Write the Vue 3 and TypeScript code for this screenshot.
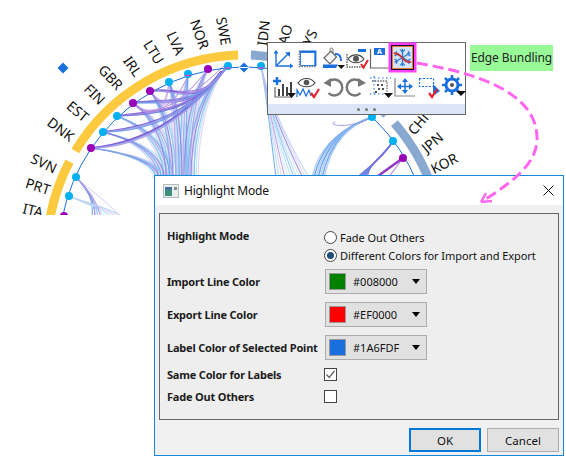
<script setup lang="ts">
const CX = 245
const CY = 253
const rad = (d: number) => (d * Math.PI) / 180
const pt = (r: number, a: number) => `${(CX + r * Math.sin(rad(a))).toFixed(1)} ${(CY - r * Math.cos(rad(a))).toFixed(1)}`
const arc = (r: number, a: number, b: number) => `M${pt(r, a)}A${r} ${r} 0 0 1 ${pt(r, b)}`

const arcs = [
  { d: arc(198, -59, -2), c: '#fdc93f' },
  { d: `M${pt(198, -88)}A198 198 0 0 1 ${pt(198, -62.5)}`, c: '#fdc93f' },
  { d: arc(198, 1.7, 45.6), c: '#8aa9d0' },
  { d: arc(198, 49, 72), c: '#8aa9d0' },
]

interface Lab { t: string; x: number; y: number; r: number }
const labels: Lab[] = [
  { t: 'SWE', x: 224, y: 31, r: 80 },
  { t: 'NOR', x: 200, y: 34, r: 70 },
  { t: 'LVA', x: 176, y: 43, r: 66 },
  { t: 'LTU', x: 154, y: 52, r: 58 },
  { t: 'IRL', x: 133, y: 66, r: 55 },
  { t: 'GBR', x: 111, y: 77, r: 47 },
  { t: 'FIN', x: 95, y: 94, r: 45 },
  { t: 'EST', x: 78, y: 111, r: 40 },
  { t: 'DNK', x: 61, y: 129, r: 37 },
  { t: 'SVN', x: 44, y: 163, r: 25 },
  { t: 'PRT', x: 38, y: 186, r: 17 },
  { t: 'ITA', x: 33, y: 210, r: 13 },
  { t: 'IDN', x: 263, y: 33, r: -84 },
  { t: 'LAO', x: 284, y: 38, r: -76 },
  { t: 'MYS', x: 307, y: 43, r: -65 },
  { t: 'CHN', x: 420, y: 121, r: -50 },
  { t: 'JPN', x: 432, y: 142, r: -40 },
  { t: 'KOR', x: 444, y: 163, r: -27 },
]

const BLUE = '#00b0f0'
const PUR = '#9a00b8'
const points = [
  [228, 66, BLUE], [208, 69, PUR], [188, 74, BLUE], [169, 82, BLUE], [150, 91, PUR], [133, 103, PUR],
  [117, 116, BLUE], [103, 132, BLUE], [91, 148, PUR], [76, 177, BLUE], [69, 196, BLUE], [64, 216, PUR],
  [261, 66, BLUE], [372, 117, BLUE], [393, 141, BLUE], [403, 158, PUR],
].map(([x, y, c]) => ({ x: x as number, y: y as number, c: c as string }))
const marks = [[228, 68], [188, 75.500], [261, 68]]

const light = ['#c6e9fb', '#a6daf7', '#ddcbf1', '#b4d0f6']
const mid = ['#5b9cec', '#7f6fdc', '#7ab8f0', '#b48ee2']

const chords: { d: string; c: string; w: number; o: number }[] = []
function down(x1: number, y1: number, tx: number, ty: number, c: string, w: number, o: number) {
  const h = ty - y1
  const dx = tx - x1
  chords.push({ d: `M${x1} ${y1}C${x1 + dx * 0.7} ${y1 + h * 0.22} ${tx} ${y1 + h * 0.6} ${tx} ${ty}`, c, w, o })
}
function archTo(x1: number, y1: number, x2: number, y2: number, sag: number, c: string, w: number, o: number) {
  chords.push({ d: `M${x1} ${y1}C${x1 + (x2 - x1) * 0.45} ${y1 - sag} ${x2 - 28} ${y2 + 38} ${x2} ${y2}`, c, w, o })
}
const sources: [number, number, number][] = [
  [228, 66, 190], [208, 69, 186], [188, 74, 182], [169, 82, 178], [150, 91, 172],
  [133, 103, 168], [117, 116, 166], [103, 132, 160], [91, 148, 158],
]
sources.forEach(([x, y, t], i) => {
  for (let k = 0; k < 7; k++) {
    down(x, y, t + k * 2.2 - 5, 178, light[(i + k) % 4], 1.1, 0.8)
  }
})
sources.forEach(([x, y, t], i) => {
  for (let k = 0; k < 3; k++) {
    down(x, y, t + k * 3 - 2, 178, mid[(i + k) % 4], 1.2, 0.7)
  }
})
;[[91, 148], [103, 132], [117, 116], [133, 103], [150, 91]].forEach(([x, y], i) => {
  for (let k = 0; k < 4; k++) {
    archTo(x, y, k % 2 ? 228 : 221, k % 2 ? 66 : 72, 6 - k * 2, k === 0 ? '#7a3fd0' : mid[(i + k) % 4], k === 0 ? 1.8 : 1.1, 0.85)
  }
})
;[[150, 91], [133, 103]].forEach(([x, y]) => {
  for (let k = 0; k < 4; k++) {
    chords.push({ d: `M${x} ${y}C${x + 12} ${y + 16} ${165 + k * 5} ${118 - k * 3} ${169 + k * 19} ${82 - k * 6}`, c: '#b48ee2', w: 1, o: 0.7 })
  }
})
for (let k = 0; k < 12; k++) {
  chords.push({ d: `M261 66C266 90 ${270 + k} 130 ${276 + k * 3} 178`, c: k % 3 === 0 ? mid[k % 4] : light[k % 4], w: 1.1, o: 0.8 })
}
for (let k = 0; k < 7; k++) {
  chords.push({ d: `M372 117C350 125 ${320 + k * 2} 140 ${312 + k * 2} 178`, c: k % 2 ? '#5b9cec' : '#a9c8f5', w: 1.4, o: 0.9 })
  chords.push({ d: `M393 141C385 155 ${372 - k} 165 ${356 + k * 2} 178`, c: k % 2 ? '#5b8fe8' : '#7f6fdc', w: 1.4, o: 0.9 })
}
chords.push({ d: 'M372 117C350 130 325 125 335 122', c: '#8a6fdc', w: 1, o: 0.7 })
chords.push({ d: 'M403 158L378 176', c: '#8a1fc0', w: 2.5, o: 0.9 })
chords.push({ d: 'M403 158L388 178', c: '#b07ad8', w: 1.2, o: 0.9 })
for (let k = 0; k < 4; k++) {
  chords.push({ d: `M76 177C88 190 ${94 + k} 200 ${92 + k * 3} 218`, c: mid[k % 4], w: 1.2, o: 0.8 })
  chords.push({ d: `M69 196C82 202 ${100 + k * 4} 208 ${106 + k * 6} 218`, c: light[k % 4], w: 1.2, o: 0.9 })
}
chords.push({ d: 'M76 177C90 190 105 200 122 218', c: '#d9c4ef', w: 1, o: 0.9 })

const rows = [
  { label: 'Import Line Color', color: '#008000', text: '#008000' },
  { label: 'Export Line Color', color: '#ff0000', text: '#EF0000' },
  { label: 'Label Color of Selected Point', color: '#1a6fdf', text: '#1A6FDF' },
]
</script>

<template>
  <div class="page">
    <svg class="canvas" width="566" height="457" viewBox="0 0 566 457">
      <defs>
        <clipPath id="cut"><rect x="0" y="0" width="566" height="215" /></clipPath>
      </defs>
      <g clip-path="url(#cut)">
        <path v-for="(a, i) in arcs" :key="i" :d="a.d" :stroke="a.c" stroke-width="9" fill="none" />
        <g fill="none" stroke-linecap="round">
          <path v-for="(c, i) in chords" :key="i" :d="c.d" :stroke="c.c" :stroke-width="c.w" :opacity="c.o" />
        </g>
        <circle cx="245" cy="253" r="186" fill="none" stroke="#1a6fdf" stroke-width="1" />
        <circle v-for="(p, i) in points" :key="i" :cx="p.x" :cy="p.y" r="4" :fill="p.c" />
        <path v-for="(m, i) in marks" :key="'m' + i" :d="`M${m[0] - 3} ${m[1]}h6`" stroke="#ff2fc0" stroke-width="1.200" />
        <text
          v-for="l in labels"
          :key="l.t"
          class="lab"
          text-anchor="middle"
          dominant-baseline="central"
          :transform="`translate(${l.x} ${l.y}) rotate(${l.r})`"
        >{{ l.t }}</text>
      </g>
      <path d="M63 62.500l5.500 5.500l-5.500 5.500l-5.500-5.500z" fill="#1a6fdf" />
      <path d="M244 62.500l5 5l-5 5l-5-5z" fill="#1a6fdf" />
      <path d="M239 67.500h10" stroke="#fff" stroke-width="1" />
    </svg>

    <section class="toolbar">
      <div class="tools">
        <svg class="ic" viewBox="0 0 24 24" fill="none" stroke="#1a6fdf" stroke-width="1.400">
          <path d="M4 5V20H20" /><path d="M4.500 19.500L17 7" />
          <path d="M1.500 7.500L4 4L6.500 7.500ZM18 17.500L21.500 20L18 22.500ZM13 6.500L18 6V11Z" fill="#1a6fdf" stroke="none" />
        </svg>
        <svg class="ic" viewBox="0 0 24 24" fill="none">
          <path d="M3 5.500H19.500V20" stroke="#1a6fdf" stroke-width="1.800" />
          <path d="M3.500 5V20.500H20" stroke="#777" stroke-width="1.600" stroke-dasharray="1.500 1" />
          <path d="M4.500 6.500H19V19.500H4.500Z" stroke="#1a6fdf" stroke-width="1" opacity=".9" />
        </svg>
        <svg class="ic" viewBox="0 0 24 24" fill="none">
          <path d="M3 12L10 5L15.500 11L9 18Z" fill="#f4f4f4" stroke="#666" stroke-width="1.200" />
          <path d="M9 7V3.500A1.500 1.500 0 0 1 12 3.500V8" stroke="#777" stroke-width="1" />
          <path d="M14 8C18 7.500 20 10 20 15" stroke="#1a6fdf" stroke-width="2" />
          <path d="M2 18.500H17L15 22H2Z" fill="#1a6fdf" />
          <path d="M16.500 19H24L20.200 23Z" fill="#111" />
        </svg>
        <svg class="ic" viewBox="0 0 24 24" fill="none">
          <path d="M2 8V21H20" stroke="#666" stroke-width="1.500" stroke-dasharray="1.500 1" />
          <rect x="13" y="3" width="8" height="3" fill="#1a6fdf" />
          <path d="M3 13C7 7.500 15 7.500 19 13C15 18 7 18 3 13Z" fill="#fff" stroke="#444" stroke-width="1.200" />
          <circle cx="11" cy="12.800" r="3" fill="#555" />
          <path d="M16 18L18.500 21.500L23 14" stroke="#e8232a" stroke-width="2" />
        </svg>
        <svg class="ic" viewBox="0 0 24 24" fill="none">
          <path d="M1.500 3V22H20" stroke="#666" stroke-width="1.200" />
          <rect x="5" y="2" width="11" height="7" fill="#1a6fdf" />
          <text x="10.500" y="8.200" class="mini" text-anchor="middle">A</text>
        </svg>
        <div class="active">
          <svg width="19" height="21" viewBox="0 0 24 24" fill="none">
            <g stroke="#2c78d8" stroke-width="1.600">
              <path d="M12 1V23M2 6L22 18M2 18L22 6" />
              <path d="M9 2L12 5L15 2M2 10L5.500 8L4 4M20 4L18.500 8L22 10M2 14L5.500 16L4 20M20 20L18.500 16L22 14M9 22L12 19L15 22" />
            </g>
            <path d="M1 7C8 6 10 11 13 14C15 17 19 18 23 18" stroke="#d92b2b" stroke-width="2.200" />
          </svg>
        </div>
      </div>
      <div class="tools second">
        <svg class="ic" viewBox="0 0 24 24" fill="none">
          <path d="M1 6H9M5 2V10" stroke="#1a6fdf" stroke-width="2.400" />
          <path d="M3 12V22H20" stroke="#666" stroke-width="1.200" />
          <path d="M7 21V14M11 21V9M15 21V12M19 21V7" stroke="#444" stroke-width="2" />
          <path d="M15 18H24L19.500 23Z" fill="#111" />
        </svg>
        <svg class="ic" viewBox="0 0 24 24" fill="none">
          <path d="M2 8C6 2 15 2 19 8C15 13 6 13 2 8Z" fill="#fff" stroke="#444" stroke-width="1.200" />
          <circle cx="10.500" cy="7.500" r="2.800" fill="#555" />
          <path d="M1 22V15L4 20L7 14L10 21L13 15L15 21" stroke="#1a6fdf" stroke-width="1.200" />
          <path d="M15 18L18 22L23 14" stroke="#e8232a" stroke-width="2.200" />
        </svg>
        <svg class="ic" viewBox="0 0 24 24" fill="none">
          <path d="M8 6.500A8 8 0 1 1 7.500 18" stroke="#777" stroke-width="2.400" />
          <path d="M2.500 8L10 3V12Z" fill="#777" />
        </svg>
        <svg class="ic" viewBox="0 0 24 24" fill="none">
          <path d="M15 6.500A8 8 0 1 0 15.500 18" stroke="#777" stroke-width="2.400" />
          <path d="M21 8L13 3V12Z" fill="#777" />
        </svg>
        <svg class="ic" viewBox="0 0 24 24" fill="none">
          <path d="M3 6H18V18" stroke="#666" stroke-width="1.300" stroke-dasharray="1.500 1.200" />
          <path d="M1 3H22M5 1V19M1 19H16" stroke="#1a6fdf" stroke-width="1" stroke-dasharray="1.500 2.500" />
          <path d="M8 9h2v2H8zM12 9h2v2h-2zM9 13h2v2H9zM13 13h2v2h-2zM6 16h2v2H6z" fill="#555" />
          <path d="M15 18H24L19.500 23Z" fill="#111" />
        </svg>
        <svg class="ic" viewBox="0 0 24 24" fill="none">
          <path d="M2 3V21H22" stroke="#888" stroke-width="1.200" />
          <path d="M5 11.500H19M12 4V18" stroke="#1a6fdf" stroke-width="1.500" />
          <path d="M4 11.500L8 8.500V14.500ZM20 11.500L16 8.500V14.500ZM12 3L9 7H15ZM12 19L9 15H15Z" fill="#1a6fdf" />
        </svg>
        <svg class="ic" viewBox="0 0 24 24" fill="none">
          <rect x="1.500" y="3.500" width="14" height="8" stroke="#1a6fdf" stroke-width="1.200" stroke-dasharray="2 1.500" />
          <path d="M15 9L15 21L22 16Z" fill="#1a6fdf" />
          <path d="M11 18L14 22L19 14" stroke="#e8232a" stroke-width="2.200" />
        </svg>
        <svg class="ic" viewBox="0 0 24 24" fill="none">
          <circle cx="10" cy="10" r="6" stroke="#1a6fdf" stroke-width="3" />
          <circle cx="10" cy="10" r="2" fill="#555" />
          <path d="M10 0V4M10 16V20M0 10H4M16 10H20M3 3L6 6M14 14L17 17M17 3L14 6M3 17L6 14" stroke="#1a6fdf" stroke-width="2.600" />
          <path d="M14 16H24L19 21Z" fill="#111" />
        </svg>
      </div>
      <div class="grip"><i></i><i></i><i></i></div>
    </section>

    <div class="tip">Edge Bundling</div>

    <section class="dialog">
      <header class="title">
        <svg class="appicon" width="16" height="14" viewBox="0 0 16 14">
          <rect x=".5" y=".5" width="15" height="13" fill="#e8eeee" stroke="#b5bcbc" />
          <rect x="2" y="3" width="7" height="9" fill="#3f8f7a" />
          <rect x="2" y="3" width="7" height="3" fill="#4a6fa0" />
          <rect x="11" y="3" width="3" height="3" fill="#888" />
        </svg>
        <span>Highlight Mode</span>
        <svg class="close" width="11" height="11" viewBox="0 0 11 11"><path d="M.5 .5L10.500 10.500M10.500 .5L.5 10.500" stroke="#111" stroke-width="1" /></svg>
      </header>
      <div class="body">
        <div class="group">
          <div class="row top">
            <div class="lbl up">Highlight Mode</div>
            <div class="radios">
              <label class="radio"><i class="dot"></i>Fade Out Others</label>
              <label class="radio"><i class="dot on"></i>Different Colors for Import and Export</label>
            </div>
          </div>
          <div v-for="r in rows" :key="r.label" class="row combo-row">
            <div class="lbl">{{ r.label }}</div>
            <div class="combo">
              <i class="swatch" :style="{ background: r.color }"></i>
              <span>{{ r.text }}</span>
              <b class="caret"></b>
            </div>
          </div>
          <div class="row check-row first">
            <div class="lbl">Same Color for Labels</div>
            <i class="check">
              <svg width="13" height="13" viewBox="0 0 13 13"><path d="M2.500 6.500L5.200 9.500L10.500 3" fill="none" stroke="#666" stroke-width="1.300" /></svg>
            </i>
          </div>
          <div class="row check-row">
            <div class="lbl">Fade Out Others</div>
            <i class="check"></i>
          </div>
        </div>
        <footer class="actions">
          <button class="btn primary">OK</button>
          <button class="btn">Cancel</button>
        </footer>
      </div>
    </section>

    <svg class="overlay" width="566" height="457" viewBox="0 0 566 457" fill="none">
      <path d="M417 63C470 72 536 90 537 137C538 165 510 183 483 201" stroke="#ff66f0" stroke-width="3" stroke-dasharray="11 5" />
      <path d="M481 202L492 201M481 202L486 193" stroke="#ff66f0" stroke-width="2.500" />
    </svg>
  </div>
</template>

<style scoped>
.page {
  position: relative;
  width: 566px;
  height: 457px;
  overflow: hidden;
  background: #fff;
  font-family: "Noto Sans", "Open Sans", sans-serif;
  color: #111;
}
.canvas,
.overlay {
  position: absolute;
  left: 0;
  top: 0;
}
.overlay {
  pointer-events: none;
}
.lab {
  font-family: "Noto Sans", sans-serif;
  font-size: 14px;
  fill: #111;
}
.toolbar {
  position: absolute;
  left: 267px;
  top: 42px;
  width: 199px;
  height: 73px;
  box-sizing: border-box;
  border: 1px solid #666;
  background: #fff;
  display: flex;
  flex-direction: column;
}
.tools {
  display: flex;
  height: 30px;
  padding-left: 4px;
  padding-top: 3px;
  gap: .3px;
  box-sizing: border-box;
}
.second {
  height: 31px;
  padding-top: 2px;
}
.ic {
  width: 24px;
  height: 24px;
  flex: none;
}
.active {
  width: 19px;
  height: 21px;
  margin: -.5px 0 0 -1px;
  flex: none;
  background: #d3e4f6;
  border: 1px solid #e8782a;
  box-shadow: 0 0 0 1px #101030, 0 0 0 3.500px #ff40ff;
  display: flex;
}
.grip {
  flex: 1;
  background: #dae6f7;
  display: flex;
  align-items: center;
  justify-content: center;
  gap: 5px;
}
.grip i {
  width: 3px;
  height: 3px;
  border-radius: 50%;
  background: #777;
}
.tip {
  position: absolute;
  left: 470px;
  top: 45px;
  width: 83px;
  height: 26px;
  background: #99fb98;
  font-size: 12px;
  letter-spacing: -.1px;
  line-height: 26px;
  text-align: center;
  color: #222;
  white-space: nowrap;
}
.dialog {
  position: absolute;
  left: 154px;
  top: 175px;
  width: 410px;
  height: 281px;
  box-sizing: border-box;
  border: 1px solid #1586d8;
  background: #f0f0f0;
  display: flex;
  flex-direction: column;
}
.title {
  height: 29px;
  flex: none;
  background: #fff;
  display: flex;
  align-items: center;
  padding: 0 9px 0 8px;
  font-size: 12px;
  letter-spacing: -.2px;
  gap: 5px;
}
.title span {
  flex: 1;
}
.body {
  flex: 1;
  display: flex;
  flex-direction: column;
  padding: 8px 4px 3px;
}
.group {
  height: 207px;
  box-sizing: border-box;
  border: 1px solid #666;
  background: #eee;
  padding: 15px 7px 0;
  display: flex;
  flex-direction: column;
}
.row {
  display: flex;
  align-items: center;
}
.lbl {
  width: 157px;
  flex: none;
  font-size: 11px;
  font-weight: 700;
  letter-spacing: -.2px;
  white-space: nowrap;
  color: #1c1c1c;
}
.up {
  align-self: flex-start;
  line-height: 14px;
}
.top {
  align-items: flex-start;
  margin-bottom: -3px;
}
.radios {
  display: flex;
  flex-direction: column;
  margin-top: -1px;
}
.radio {
  display: flex;
  align-items: center;
  height: 18px;
  font-size: 11px;
  letter-spacing: -.05px;
  gap: 3px;
  white-space: nowrap;
}
.dot {
  width: 13px;
  height: 13px;
  box-sizing: border-box;
  border-radius: 50%;
  border: 1px solid #444;
  background: #fff;
  position: relative;
}
.dot.on::after {
  content: "";
  position: absolute;
  inset: 2px;
  border-radius: 50%;
  background: #1f4e79;
}
.combo-row {
  margin-top: 8px;
}
.combo {
  width: 102px;
  height: 25px;
  box-sizing: border-box;
  border: 1px solid #adadad;
  background: #e1e1e1;
  display: flex;
  align-items: center;
  padding: 0 6px 0 3px;
  font-size: 11px;
  margin-left: 1px;
}
.swatch {
  width: 17px;
  height: 17px;
  box-sizing: border-box;
  border: 1px solid #999;
  flex: none;
  margin-right: 7px;
}
.combo span {
  flex: 1;
}
.caret {
  width: 0;
  height: 0;
  border-left: 4.500px solid transparent;
  border-right: 4.500px solid transparent;
  border-top: 5px solid #000;
}
.check-row {
  height: 18px;
  margin-top: 4px;
}
.check-row.first {
  margin-top: 5px;
}
.check {
  width: 13px;
  height: 13px;
  box-sizing: border-box;
  border: 1px solid #444;
  background: #fff;
  display: flex;
  align-items: center;
  justify-content: center;
}
.check svg {
  flex: none;
}
.actions {
  display: flex;
  justify-content: flex-end;
  gap: 6px;
  margin-top: 8px;
}
.btn {
  width: 72px;
  height: 24px;
  box-sizing: border-box;
  border: 1px solid #adadad;
  background: #e1e1e1;
  font-family: inherit;
  font-size: 11.500px;
  color: #111;
  padding: 0;
}
.primary {
  border: 2px solid #0078d7;
}
.mini {
  font-family: "Noto Sans", sans-serif;
  font-size: 7px;
  font-weight: 700;
  fill: #fff;
}
</style>
